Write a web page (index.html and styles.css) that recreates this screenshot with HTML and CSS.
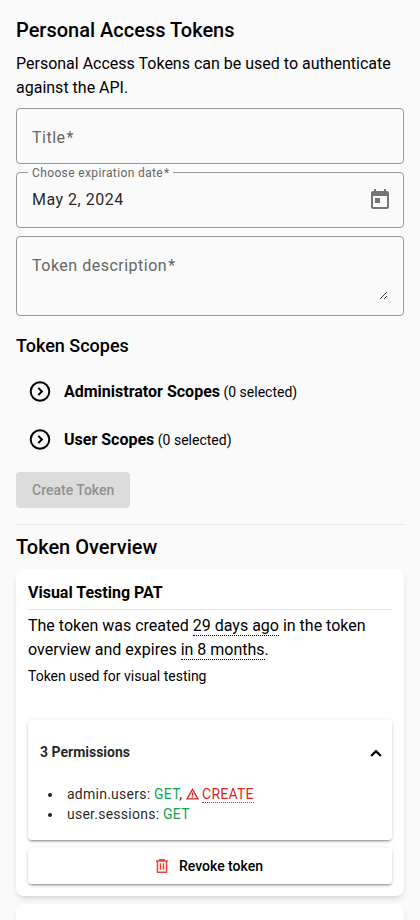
FILE: index.html
```html
<!DOCTYPE html>
<html lang="en">
<head>
<meta charset="utf-8">
<title>Personal Access Tokens</title>
<link rel="stylesheet" href="styles.css">
</head>
<body>
<main class="page">
  <h1 class="heading">Personal Access Tokens</h1>
  <p class="intro">Personal Access Tokens can be used to authenticate against the API.</p>
  <form class="form">
    <div class="field"><span class="placeholder">Title<span class="star">*</span></span></div>
    <div class="field field-date">
      <span class="float-label">Choose expiration date<span class="star">*</span></span>
      <span class="value">May 2, 2024</span>
      <svg class="calendar" viewBox="0 0 24 24" width="24" height="24"><path fill="currentColor" d="M19 3h-1V1h-2v2H8V1H6v2H5c-1.110 0-1.990.9-1.990 2L3 19c0 1.100.89 2 2 2h14c1.100 0 2-.9 2-2V5c0-1.100-.9-2-2-2zm0 16H5V8h14v11zM7 10h5v5H7z"/></svg>
    </div>
    <div class="field field-area">
      <span class="placeholder">Token description<span class="star">*</span></span>
      <svg class="grip" viewBox="0 0 7 7" width="7" height="7" shape-rendering="crispEdges"><path fill="none" stroke="#444" d="M0 6.500h1M1 5.500h1M2 4.500h1M3 3.500h1M4 2.500h1M5 1.500h1M6 .5h1M4 6.500h1M5 5.500h1M6 4.500h1"/></svg>
    </div>
  </form>
  <h2 class="subheading">Token Scopes</h2>
  <div class="scope">
    <svg class="scope-icon" viewBox="0 0 24 24" width="24" height="24"><g fill="none" stroke="currentColor" stroke-width="2"><circle cx="12" cy="11.500" r="9.300"/><path d="M10.300 7.900 13.900 11.500l-3.600 3.600"/></g></svg>
    <span><b class="scope-name">Administrator Scopes</b> (0 selected)</span>
  </div>
  <div class="scope">
    <svg class="scope-icon" viewBox="0 0 24 24" width="24" height="24"><g fill="none" stroke="currentColor" stroke-width="2"><circle cx="12" cy="11.500" r="9.300"/><path d="M10.300 7.900 13.900 11.500l-3.600 3.600"/></g></svg>
    <span><b class="scope-name">User Scopes</b> (0 selected)</span>
  </div>
  <button class="create" disabled>Create Token</button>
  <hr class="divider">
  <h1 class="heading overview">Token Overview</h1>
  <section class="card">
    <h3 class="card-title">Visual Testing PAT</h3>
    <p class="dates">The token was created <span class="hint">29 days ago</span> in the token overview and expires <span class="hint">in 8 months</span>.</p>
    <p class="description">Token used for visual testing</p>
    <div class="panel">
      <div class="panel-head">
        <span>3 Permissions</span>
        <svg class="chevron" viewBox="0 0 12 8" width="12" height="8"><path fill="none" stroke="currentColor" stroke-width="2.200" d="M1.100 7 6 2.100 10.900 7"/></svg>
      </div>
      <ul class="permissions">
        <li>admin.users: <span class="ok">GET</span>, <span class="danger"><svg class="warn" viewBox="0 0 13 12" width="13" height="12"><path fill="none" stroke="currentColor" stroke-width="1.400" d="M6.500 1.500 12 10.900H1z"/><path stroke="currentColor" stroke-width="1.400" d="M6.500 4.500v3.200M6.500 8.400v1.300"/></svg><span class="hint-danger">CREATE</span></span></li>
        <li>user.sessions: <span class="ok">GET</span></li>
      </ul>
    </div>
    <button class="revoke">
      <svg class="trash" viewBox="0 0 12 14" width="12" height="14"><path fill="none" stroke="currentColor" stroke-width="1.500" d="M0 1.900h12M3.700 1.500V.75h4.600v.75M1.450 2v11.250h9.100V2M4.500 4.300v6.400M7.500 4.300v6.400"/></svg>
      <span>Revoke token</span>
    </button>
  </section>
  <section class="card next-card"></section>
</main>
</body>
</html>
```
FILE: styles.css
```css
* { box-sizing: border-box; }
body {
  margin: 0;
  background: #fafafa;
  color: #000;
  font: 14px/20px Roboto, sans-serif;
}
h1, h2, h3, p, ul { margin: 0; }
.page { padding: 16px 16px 0; }
.heading { font-size: 20px; line-height: 28px; font-weight: 500; }
.intro { margin-top: 8px; font-size: 16px; line-height: 24px; }
.form { display: flex; flex-direction: column; gap: 8px; margin-top: 8px; }
.field {
  position: relative;
  display: flex;
  align-items: center;
  height: 56px;
  padding: 0 15px;
  border: 1px solid #999;
  border-radius: 4px;
  font-size: 16px;
  line-height: 24px;
  letter-spacing: .5px;
  color: rgba(0, 0, 0, .87);
}
.placeholder { color: #666; padding-top: 4px; }
.star { margin-left: 1px; }
.field-date { justify-content: space-between; padding-right: 11px; }
.float-label {
  position: absolute;
  left: 11px;
  top: -8px;
  padding: 0 3px 0 4px;
  background: #fafafa;
  color: #666;
  font-size: 12px;
  line-height: 16px;
  letter-spacing: .375px;
}
.calendar { color: #757575; }
.field-area { height: 80px; align-items: flex-start; justify-content: space-between; padding-top: 13px; padding-right: 16px; }
.grip { align-self: flex-end; margin-bottom: 16px; }
.subheading { margin: 16px 0 8px; font-size: 18px; line-height: 28px; font-weight: 500; }
.scope { display: flex; align-items: center; gap: 12px; height: 48px; padding-left: 12px; }
.scope-name { font-size: 16px; font-weight: 700; }
.create {
  display: block;
  height: 36px;
  margin-top: 8px;
  padding: 0 16px;
  border: 0;
  border-radius: 4px;
  background: #dcdcdc;
  color: #919191;
  font: 500 14px/36px Roboto, sans-serif;
}
.divider { margin: 16px 0 0; border: 0; border-top: 1px solid #e5e7eb; }
.overview { margin-top: 8px; }
.card {
  margin-top: 8px;
  height: 327px;
  padding: 12px;
  border-radius: 8px;
  background: #fff;
  box-shadow: 0 4px 6px -1px rgba(0, 0, 0, .1), 0 2px 4px -2px rgba(0, 0, 0, .1);
}
.next-card { height: 16px; padding: 0; border-radius: 8px 8px 0 0; }
.card-title { height: 29px; padding-bottom: 4px; border-bottom: 1px solid #e5e5e5; font-size: 16px; line-height: 24px; font-weight: 700; }
.dates { margin-top: 4px; font-size: 16px; line-height: 24px; }
.hint { border-bottom: 1px dotted #000; }
.description { margin-top: 4px; }
.panel, .revoke {
  border-radius: 4px;
  background: #fff;
  box-shadow: 0 3px 1px -2px rgba(0, 0, 0, .2), 0 2px 2px rgba(0, 0, 0, .14), 0 1px 5px rgba(0, 0, 0, .12);
}
.panel { height: 120px; margin-top: 34px; color: rgba(0, 0, 0, .87); }
.panel-head { display: flex; align-items: center; justify-content: space-between; height: 64px; padding: 0 10px 0 12px; font-weight: 700; }
.chevron { color: #000; margin-top: 1px; }
.permissions { padding: 0 0 0 20px; letter-spacing: .25px; list-style: none; }
.permissions li { display: flow-root; white-space: nowrap; }
.permissions li::before {
  content: "";
  display: inline-block;
  width: 4px;
  height: 4px;
  margin-right: 15px;
  border-radius: 50%;
  background: currentColor;
  vertical-align: 2px;
}
.ok { color: #16a34a; }
.danger { color: #dc2626; }
.warn { margin-right: 3px; vertical-align: -1px; }
.hint-danger { border-bottom: 1px dotted #dc2626; }
.revoke {
  display: flex;
  align-items: center;
  justify-content: center;
  gap: 11px;
  width: 100%;
  height: 36px;
  margin-top: 8px;
  padding: 0 7px 0 6px;
  border: 0;
  color: #000;
  font: 500 14px/20px Roboto, sans-serif;
}
.trash { color: #f44336; }
```
